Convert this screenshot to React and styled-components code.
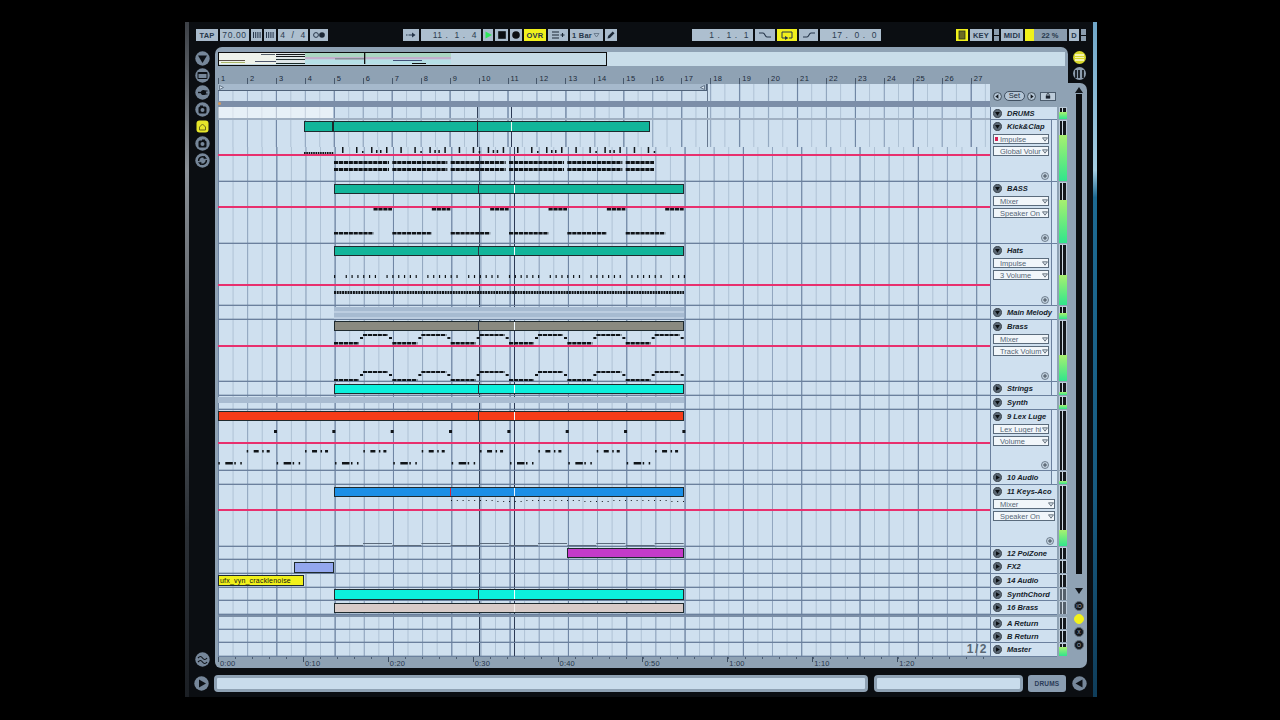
import React from 'react';
import styled, { createGlobalStyle, css } from 'styled-components';

const GlobalStyle = createGlobalStyle`
  html, body {
    margin: 0;
    height: 100%;
    overflow: hidden;
    background: #000;
    font-family: "Liberation Sans", Arial, sans-serif;
  }
  * { box-sizing: border-box; }
`;

const PANEL = '#8fa2b4';
const LANE = '#cfe0ef';
const LINE = '#6b809d';
const YELLOW = '#f1f11c';
const UPPER_BAR = 28.96;
const LOWER_BAR = 29.17;
const PERIOD = LOWER_BAR * 2;

const gridLines = css`
  background-color: ${LANE};
  background-image:
    linear-gradient(to right, #6f85a3 1px, transparent 1px),
    linear-gradient(to right, #90a5be 1px, transparent 1px),
    linear-gradient(to right, #aec1d4 1px, transparent 1px);
  background-size: ${({ $bar }) => `${$bar * 2}px 100%, ${$bar}px 100%, ${$bar / 2}px 100%`};
`;

const S = {
  Page: styled.div`
    width: 1280px;
    height: 720px;
    padding: 22px 0 0 185px;
    background: #000;
  `,
  Window: styled.div`
    display: flex;
    width: 912px;
    height: 675px;
    overflow: hidden;
  `,
  LeftEdge: styled.div`
    flex: 0 0 4px;
    background: linear-gradient(#3c4046, #8a9096 22%, #5f646a 45%, #2a2f35 75%, #1b1f24);
  `,
  RightEdge: styled.div`
    flex: 0 0 4px;
    background: linear-gradient(#6fa6c8, #a4cde2 22%, #1d6a93 26%, #175a80 70%, #0f3d5a);
  `,
  Content: styled.div`
    flex: 1;
    min-width: 0;
    background: #0b0e12;
  `,
  Toolbar: styled.div`
    display: flex;
    justify-content: space-between;
    padding: 7px 7px 0;
    height: 25px;
  `,
  Group: styled.div`
    display: flex;
    gap: 2px;
    height: 12px;
  `,
  Tool: styled.div`
    display: flex;
    align-items: center;
    justify-content: center;
    width: ${({ $w }) => $w}px;
    height: 12px;
    color: #26364a;
    background: ${({ $active }) => ($active ? YELLOW : '#a9bbcc')};
    font-size: 7.5px;
    font-weight: 700;
    letter-spacing: 0.2px;
    white-space: nowrap;
  `,
  Display: styled.div`
    display: flex;
    align-items: center;
    justify-content: ${({ $end }) => ($end ? 'flex-end' : 'center')};
    width: ${({ $w }) => $w}px;
    height: 12px;
    padding-right: ${({ $end }) => ($end ? 4 : 0)}px;
    color: #2c3c50;
    background: #adbfcf;
    font-size: 8.5px;
    letter-spacing: 0.6px;
    white-space: pre;
  `,
  Cpu: styled.div`
    display: flex;
    align-items: center;
    justify-content: center;
    width: 42px;
    height: 12px;
    padding-left: 8px;
    color: #26364a;
    background: linear-gradient(to right, ${YELLOW} 9px, #8a9cae 9px);
    font-size: 7.5px;
    font-weight: 700;
  `,
  Stack: styled.div`
    display: flex;
    flex-direction: column;
    gap: 1px;
    width: 5px;
    height: 12px;
    &::before, &::after {
      content: '';
      flex: 1;
      background: #8b9dae;
    }
  `,
  Main: styled.div`
    display: flex;
    height: 621px;
  `,
  LeftRail: styled.div`
    flex: 0 0 26px;
    display: flex;
    flex-direction: column;
    align-items: center;
    justify-content: space-between;
    padding: 4px 0 1px;
  `,
  RailIcons: styled.div`
    display: flex;
    flex-direction: column;
    gap: 2px;
  `,
  RailIcon: styled.svg`
    display: block;
    width: 15px;
    height: 15px;
  `,
  Panel: styled.div`
    flex: 0 0 853px;
    padding: 5px 1px 0 3px;
    background: ${PANEL};
    border-radius: 7px 7px 0 6px;
  `,
  Overview: styled.div`
    height: 14px;
    margin: 0 2px 4px 0;
    background: #c9dde9;
  `,
  OverviewBox: styled.div`
    width: 389px;
    height: 14px;
    border: 1.5px solid #0c0c0c;
    background: #c5dbe6;
  `,
  Ruler: styled.div`
    display: flex;
    height: 14px;
  `,
  RulerCell: styled.div`
    position: relative;
    flex: 0 0 ${UPPER_BAR}px;
    padding: 4px 0 0 3px;
    color: #1c2a3a;
    font-size: 7.5px;
    line-height: 9px;
    letter-spacing: 0.4px;
    &::before {
      content: '';
      position: absolute;
      left: 0;
      bottom: 0;
      width: 1px;
      height: 6px;
      background: #47586c;
    }
  `,
  TopArea: styled.div`
    display: flex;
    height: 23px;
  `,
  TopLeft: styled.div`
    flex: 0 0 772px;
  `,
  TopLane: styled.div`
    position: relative;
    height: 17px;
    ${gridLines}
  `,
  LoopBrace: styled.div`
    position: absolute;
    left: 0;
    top: 0;
    width: 489px;
    height: 7px;
    background: #a6b9cc;
    border-bottom: 1px solid #4f6279;
    border-right: 1px solid #4f6279;
  `,
  LoopEnd: styled.svg`
    position: absolute;
    top: 1px;
    ${({ $right }) => ($right ? 'right: 1px;' : 'left: 1px;')}
    width: 5px;
    height: 5px;
  `,
  Band: styled.div`
    position: relative;
    height: 6px;
    background: #7c8ea8;
    &::before {
      content: '';
      position: absolute;
      left: 0;
      top: 1px;
      width: 3px;
      height: 3px;
      border-radius: 50%;
      background: #d89a5a;
    }
  `,
  SetBar: styled.div`
    display: flex;
    align-items: center;
    gap: 2px;
    height: 10px;
    margin: 7px 0 0 3px;
  `,
  SetPill: styled.div`
    width: 21px;
    height: 10px;
    border: 1px solid #3f4f60;
    border-radius: 5px;
    color: #1c2a3a;
    background: #b5c6d6;
    font-size: 7.5px;
    line-height: 8px;
    text-align: center;
  `,
  LockButton: styled.div`
    display: flex;
    align-items: center;
    justify-content: center;
    width: 16px;
    height: 9px;
    margin-left: 2px;
    background: #bccbd9;
    border: 1px solid #4c5c6d;
  `,
  Row: styled.div`
    display: flex;
    height: ${({ $h }) => $h}px;
  `,
  Lane: styled.div`
    position: relative;
    flex: 0 0 772px;
    overflow: hidden;
    border-bottom: ${({ $thick }) => ($thick ? '2px solid #a0b0c2' : `1px solid ${LINE}`)};
    box-shadow: inset 0 -1px 0 rgba(107, 128, 157, 0.35);
    ${gridLines}
  `,
  UpperGrid: styled.div`
    position: absolute;
    left: 0;
    top: 0;
    width: 100%;
    height: ${({ $h }) => $h}px;
    ${gridLines}
  `,
  LightPatch: styled.div`
    position: absolute;
    left: 0;
    top: 0;
    width: 115px;
    height: 100%;
    background: rgba(255, 255, 255, 0.5);
  `,
  Marker: styled.div`
    position: absolute;
    left: ${({ $x }) => $x}px;
    top: ${({ $top }) => $top || 0}px;
    bottom: 0;
    width: 1px;
    background: ${({ $color }) => $color || '#33425a'};
  `,
  AutomationLine: styled.div`
    position: absolute;
    left: 0;
    right: 0;
    top: ${({ $y }) => $y}px;
    height: 2px;
    background: #e8306e;
  `,
  Clip: styled.div`
    position: absolute;
    left: ${({ $x }) => $x}px;
    top: ${({ $y }) => $y}px;
    width: ${({ $w }) => $w}px;
    height: ${({ $h }) => $h}px;
    overflow: hidden;
    background: ${({ $color }) => $color};
    border: ${({ $flat }) => ($flat ? 'none' : '1px solid #1e2a2e')};
    color: #111;
    font-size: 7px;
    line-height: 9px;
    padding-left: 1px;
    letter-spacing: 0.2px;
    white-space: nowrap;
  `,
  ClipTick: styled.div`
    position: absolute;
    left: ${({ $x }) => $x}px;
    top: 0;
    bottom: 0;
    width: 1px;
    background: ${({ $color }) => $color};
  `,
  Notes: styled.svg`
    position: absolute;
    left: 0;
    top: 0;
    width: 772px;
    height: 100%;
  `,
  PageMark: styled.div`
    position: absolute;
    right: 2px;
    top: 0;
    color: #5a6876;
    font-size: 12px;
    font-weight: 700;
    line-height: 13px;
    letter-spacing: 1.5px;
  `,
  Header: styled.div`
    flex: 0 0 67px;
    background: #d6e6f4;
    border-bottom: 1px solid ${LINE};
    border-left: 1px solid ${LINE};
  `,
  HeaderInner: styled.div`
    display: flex;
    flex-direction: column;
    height: 100%;
    margin-right: ${({ $inset }) => ($inset ? 5 : 0)}px;
    padding: 0 0 0 2px;
    background: ${LANE};
    border-right: ${({ $inset }) => ($inset ? `1px solid ${LINE}` : 'none')};
  `,
  TitleRow: styled.div`
    display: flex;
    align-items: center;
    flex: 0 0 13px;
    gap: 5px;
  `,
  TrackName: styled.span`
    color: #141c2a;
    font-size: 7.5px;
    font-style: italic;
    font-weight: 700;
    white-space: nowrap;
  `,
  Chooser: styled.div`
    position: relative;
    display: flex;
    align-items: center;
    width: ${({ $wide }) => ($wide ? 62 : 56)}px;
    height: 10px;
    margin-top: ${({ $first }) => ($first ? 1 : 2)}px;
    padding-left: 6px;
    color: #566778;
    background: #f1f6fa;
    border: 1px solid #5a6b7c;
    font-size: 7.5px;
    white-space: nowrap;
  `,
  RedSquare: styled.span`
    position: absolute;
    left: 1px;
    top: 2px;
    width: 3px;
    height: 4px;
    background: #d81f55;
  `,
  ChooserArrow: styled.svg`
    position: absolute;
    right: 0;
    top: 2px;
    width: 6px;
    height: 5px;
  `,
  AddButton: styled.svg`
    display: block;
    align-self: flex-end;
    width: 8px;
    height: 8px;
    margin: auto ${({ $wide }) => ($wide ? 3 : 2)}px 1px 0;
  `,
  Meter: styled.div`
    display: flex;
    flex-direction: column;
    flex: 0 0 8px;
    margin-left: 2px;
    background: #bccbd9;
    border-bottom: 1px solid ${PANEL};
  `,
  MeterBars: styled.div`
    flex: 1;
    margin: 1px 1px 0;
    background: linear-gradient(to right,
      ${({ $dim }) => ($dim ? '#55606b' : '#14181c')} 0 2.5px, #cfdae4 2.5px 3.5px,
      ${({ $dim }) => ($dim ? '#55606b' : '#14181c')} 3.5px 6px);
  `,
  MeterFill: styled.div`
    height: ${({ $level }) => $level}%;
    background: linear-gradient(#a8f070, #30e68c);
  `,
  Separator: styled.div`
    width: 772px;
    height: 2px;
    background: #7b8ea6;
  `,
  TimeRuler: styled.div`
    display: flex;
    height: 11px;
    width: 772px;
    background-image: linear-gradient(to right, #4d5e72 1px, transparent 1px);
    background-size: 17px 2px;
    background-repeat: repeat-x;
  `,
  TimeCell: styled.div`
    position: relative;
    flex: 0 0 84.9px;
    padding: 2px 0 0 2px;
    color: #25354a;
    font-size: 7.5px;
    line-height: 9px;
    letter-spacing: 0.2px;
    &::before {
      content: '';
      position: absolute;
      left: 0;
      top: 0;
      width: 1px;
      height: 5px;
      background: #3d4d60;
    }
  `,
  RightColumn: styled.div`
    flex: 0 0 19px;
    display: flex;
    flex-direction: column;
  `,
  TopDiscs: styled.div`
    display: flex;
    flex-direction: column;
    align-items: center;
    gap: 3px;
    height: 36px;
    padding: 4px 0 0 3px;
  `,
  Disc: styled.div`
    display: flex;
    flex-direction: column;
    align-items: center;
    justify-content: center;
    gap: 1px;
    width: 13px;
    height: 13px;
    border-radius: 50%;
    background: ${({ $yellow }) => ($yellow ? '#d8d82c' : '#8d9dae')};
  `,
  DiscLine: styled.span`
    width: 9px;
    height: 1.5px;
    background: #f4f4b0;
  `,
  DiscBars: styled.span`
    width: 9px;
    height: 8px;
    background: repeating-linear-gradient(to right, #20262c 0 2px, transparent 2px 3.5px);
  `,
  SideRail: styled.div`
    flex: 1;
    display: flex;
    flex-direction: column;
    align-items: center;
    padding: 4px 0 0 3px;
    background: ${PANEL};
    border-radius: 0 7px 7px 0;
  `,
  ScrollBar: styled.div`
    width: 6px;
    height: 480px;
    margin: 1px 0 14px;
    background: #0a0c0f;
  `,
  Triangle: styled.div`
    width: 0;
    height: 0;
    border-left: 4px solid transparent;
    border-right: 4px solid transparent;
    ${({ $up }) => ($up ? 'border-bottom: 6px solid #12161b;' : 'border-top: 6px solid #12161b;')}
  `,
  SmallDiscs: styled.div`
    display: flex;
    flex-direction: column;
    align-items: center;
    gap: 3px;
    margin-top: 7px;
  `,
  SmallDisc: styled.div`
    width: 10px;
    height: 10px;
    border-radius: 50%;
    color: #aeb9c4;
    background: ${({ $yellow }) => ($yellow ? YELLOW : '#14181d')};
    border: 1px solid ${({ $yellow }) => ($yellow ? YELLOW : '#5e6b78')};
    font-size: 5px;
    line-height: 8px;
    text-align: center;
  `,
  Bottom: styled.div`
    display: flex;
    align-items: center;
    height: 17px;
    margin-top: 7px;
  `,
  PlayCell: styled.div`
    position: relative;
    flex: 0 0 25px;
    display: flex;
    justify-content: center;
    &::after {
      content: '';
      position: absolute;
      left: 10px;
      top: 21px;
      width: 12px;
      height: 8px;
      border-radius: 50%;
      background: #e8eef4;
    }
  `,
  Field: styled.div`
    flex: 0 0 ${({ $w }) => $w}px;
    height: 17px;
    margin-right: ${({ $mr }) => $mr}px;
    background: #c9dcec;
    border: 3px solid ${PANEL};
    border-radius: 4px;
  `,
  ScopeButton: styled.div`
    flex: 0 0 38px;
    height: 17px;
    margin-right: 6px;
    color: #2a3b58;
    background: #8a9db1;
    border-radius: 3px;
    font-size: 6.5px;
    font-weight: 700;
    line-height: 17px;
    text-align: center;
    letter-spacing: 0.2px;
  `,
};

const barLabels = Array.from({ length: 27 }, (_, i) => i + 1);
const timeLabels = ['0:00', '0:10', '0:20', '0:30', '0:40', '0:50', '1:00', '1:10', '1:20'];
const X = x => x - 218;

const Rects = ({ items, fill = '#101418' }) =>
  items.map(([x, y, w, h], i) => <rect key={i} x={x} y={y} width={w} height={h} fill={fill} />);

// every 2 bars from a start position until the end of the clip
const periods = (start, end) => {
  const out = [];
  for (let x = X(start); x < X(end); x += PERIOD) out.push(x);
  return out;
};

const dashes = (x0, x1, y, h, w = 4.2) => {
  const out = [];
  for (let x = x0; x < x1; x += w + 0.7) out.push([x, y, Math.min(w, x1 - x), h]);
  return out;
};

const kickNotes = () => {
  const items = [...dashes(X(304), X(334), 32, 2, 1.6)];
  const ticks = [[8, 6], [22, 6], [28, 2], [37, 6], [42, 3], [46, 3], [52, 6]];
  periods(334, 654).forEach(p => {
    ticks.forEach(([o, h]) => {
      if (p + o < X(654)) items.push([p + o, 33 - h, 1.5, h]);
    });
    const end = Math.min(p + 55, X(654));
    items.push(...dashes(p, end, 41, 3), ...dashes(p, end, 48, 3));
  });
  return items;
};

const bassNotes = () => {
  const items = [];
  periods(334, 684).forEach(p => {
    items.push(...dashes(p + 39.5, p + 58, 26, 2.5), ...dashes(p, p + 39.5, 50, 2.5));
  });
  return items;
};

const hatsNotes = () => {
  const items = [];
  for (let x = X(334); x < X(684); x += 5.83) {
    if (Math.round(x / 5.83) % 7 !== 0) items.push([x, 31, 1.2, 3]);
  }
  items.push(...dashes(X(334), X(684), 47, 3, 2));
  return items;
};

const brassNotes = () => {
  const items = [];
  [[22, 14, 17], [59, 51, 54]].forEach(([low, high, mid]) => {
    periods(334, 684).forEach(p => {
      items.push(
        ...dashes(p, p + 25, low, 2.5),
        [p + 26, mid, 3, 2],
        ...dashes(p + 29, p + 54, high, 2),
        [p + 55, mid, 3, 2],
      );
    });
  });
  return items.filter(([x]) => x < X(684));
};

const lexNotes = () => {
  const items = [];
  for (let x = X(274); x < X(684); x += PERIOD) items.push([x, 20, 3, 3]);
  const mid = [[0, 1.5], [7, 5], [15.5, 1.5], [20, 3]];
  for (let x = X(246.7); x < X(684); x += PERIOD) mid.forEach(([o, w]) => items.push([x + o, 40, w, 2.5]));
  const low = [[0, 1.5], [7, 7.5], [16, 1.5], [22, 1.5]];
  for (let x = X(218.3); x < X(684); x += PERIOD) low.forEach(([o, w]) => items.push([x + o, 52, w, 2.5]));
  return items.filter(([x]) => x < X(684));
};

const keysDots = () => {
  const items = [];
  for (let x = X(451); x < X(684); x += 5.8) items.push([x, 15 + (Math.round(x) % 3 === 0 ? 1 : 0), 1, 1]);
  return items;
};

const keysLine = () => {
  const items = [];
  periods(334, 684).forEach(p => {
    items.push([p, 60, 29, 1], [p + 29, 58, 29, 1]);
  });
  return items;
};

const teal = '#12b59a';
const cyan = '#0cf0dc';
const band = 'linear-gradient(#a7bbd1 0 35%, #bccde0 35% 50%, #a7bbd1 50% 80%, #bccde0 80%)';

const tracks = [
  { name: 'DRUMS', h: 13, level: 55, upper: 13, patch: true, thick: true },
  {
    name: 'Kick&Clap', h: 62, inset: true, level: 76, upper: 27, auto: 34, add: true,
    choosers: [{ label: 'Impulse', red: true }, { label: 'Global Volur' }],
    clips: [
      { from: 304, to: 333, y: 1, h: 11, color: teal, marks: [] },
      { from: 333, to: 650, y: 1, h: 11, color: teal, marks: [[477, '#1e2a2e'], [511, '#eafaf6']] },
    ],
    notes: kickNotes(),
  },
  {
    name: 'BASS', h: 62, inset: true, level: 71, auto: 24, add: true,
    choosers: [{ label: 'Mixer' }, { label: 'Speaker On' }],
    clips: [{ from: 334, to: 684, y: 2, h: 10, color: teal }],
    notes: bassNotes(),
  },
  {
    name: 'Hats', h: 62, inset: true, level: 50, auto: 40, add: true,
    choosers: [{ label: 'Impulse' }, { label: '3 Volume' }],
    clips: [{ from: 334, to: 684, y: 2, h: 10, color: teal }],
    notes: hatsNotes(),
  },
  {
    name: 'Main Melody', h: 14, level: 50,
    clips: [{ from: 334, to: 684, y: 1, h: 12, color: band, flat: true, marks: [] }],
  },
  {
    name: 'Brass', h: 62, inset: true, level: 42, auto: 25, add: true,
    choosers: [{ label: 'Mixer' }, { label: 'Track Volum' }],
    clips: [{ from: 334, to: 684, y: 1, h: 10, color: '#8a8a80' }],
    notes: brassNotes(),
  },
  {
    name: 'Strings', h: 14, inset: true, closed: true, level: 20,
    clips: [{ from: 334, to: 684, y: 2, h: 10, color: cyan }],
  },
  {
    name: 'Synth', h: 14, level: 30,
    clips: [{ from: 218, to: 684, y: 1, h: 6, color: '#a9bcd1', flat: true, marks: [] }],
  },
  {
    name: '9 Lex Luge', h: 61, inset: true, level: 0, auto: 32, add: true,
    choosers: [{ label: 'Lex Luger hi' }, { label: 'Volume' }],
    clips: [{ from: 218, to: 684, y: 1, h: 10, color: '#f63c18' }],
    notes: lexNotes(),
  },
  { name: '10 Audio', h: 14, inset: true, closed: true, level: 20 },
  {
    name: '11 Keys-Aco', h: 62, level: 27, auto: 24, add: true, wide: true,
    choosers: [{ label: 'Mixer' }, { label: 'Speaker On' }],
    clips: [{ from: 334, to: 684, y: 2, h: 10, color: '#1c8fe6', marks: [[450, '#d8203a'], [514, '#eaf6ff']] }],
    notes: keysDots(),
    lines: keysLine(),
  },
  {
    name: '12 PoiZone', h: 13, closed: true, level: 0,
    clips: [{ from: 567, to: 684, y: 1, h: 10, color: '#c43bc9' }],
  },
  {
    name: 'FX2', h: 14, closed: true, level: 0,
    clips: [{ from: 294, to: 334, y: 2, h: 11, color: '#93a7ee', marks: [] }],
  },
  {
    name: '14 Audio', h: 14, closed: true, level: 0,
    clips: [{ from: 218, to: 304, y: 1, h: 11, color: YELLOW, label: 'ufx_vyn_cracklenoise', marks: [] }],
  },
  {
    name: 'SynthChord', h: 13, closed: true, level: 0, dim: true,
    clips: [{ from: 334, to: 684, y: 1, h: 11, color: cyan }],
  },
  {
    name: '16 Brass', h: 14, closed: true, level: 0, dim: true,
    clips: [{ from: 334, to: 684, y: 2, h: 10, color: '#d8cbc8', marks: [[514, '#f4f0ee']] }],
  },
];

const returns = [
  { name: 'A Return', h: 13, closed: true, level: 0 },
  { name: 'B Return', h: 13, closed: true, level: 0 },
  { name: 'Master', h: 14, closed: true, level: 70, pageMark: true },
];

const FoldButton = ({ closed }) => (
  <svg width="9" height="9" viewBox="0 0 10 10" style={{ flex: 'none' }}>
    <circle cx="5" cy="5" r="4.6" fill="#596673" stroke="#2c353e" strokeWidth="0.8" />
    <polygon points={closed ? '3.4,2.4 7.6,5 3.4,7.6' : '2.4,3.4 7.6,3.4 5,7.6'} fill="#0a0d10" />
  </svg>
);

const RoundArrow = ({ right }) => (
  <svg width="9" height="9" viewBox="0 0 10 10">
    <circle cx="5" cy="5" r="4.4" fill="#b5c6d6" stroke="#3a4855" />
    <polygon points={right ? '4,2.6 7.4,5 4,7.4' : '6,2.6 2.6,5 6,7.4'} fill="#141a20" />
  </svg>
);

const Chooser = ({ label, red, first, wide }) => (
  <S.Chooser $first={first} $wide={wide}>
    {red && <S.RedSquare />}
    {label}
    <S.ChooserArrow viewBox="0 0 6 5">
      <polygon points="0.5,0.8 5.5,0.8 3,4.2" fill="#d8e2ea" stroke="#3f4c59" strokeWidth="0.7" />
    </S.ChooserArrow>
  </S.Chooser>
);

const Header = ({ track }) => (
  <S.Header>
    <S.HeaderInner $inset={track.inset}>
      <S.TitleRow>
        <FoldButton closed={track.closed} />
        <S.TrackName>{track.name}</S.TrackName>
      </S.TitleRow>
      {track.choosers && track.choosers.map((c, i) => (
        <Chooser key={c.label} {...c} first={i === 0} wide={track.wide} />
      ))}
      {track.add && (
        <S.AddButton $wide={track.wide} viewBox="0 0 8 8">
          <circle cx="4" cy="4" r="3.5" fill="#c2d2e0" stroke="#5a6978" strokeWidth="0.8" />
          <path d="M2 4h4M4 2v4" stroke="#39444f" strokeWidth="0.9" />
        </S.AddButton>
      )}
    </S.HeaderInner>
  </S.Header>
);

const Clip = ({ from, to, y, h, color, flat, label, marks }) => {
  const ticks = marks || [[478, '#2a3644'], [514, '#f2fbff']];
  return (
    <S.Clip $x={X(from)} $y={y} $w={to - from} $h={h} $color={color} $flat={flat}>
      {label}
      {ticks.map(([x, c]) => <S.ClipTick key={x} $x={x - from - 1} $color={c} />)}
    </S.Clip>
  );
};

const Lane = ({ track }) => {
  const upper = track.upper || 0;
  return (
    <S.Lane $bar={LOWER_BAR} $thick={track.thick}>
      {upper < track.h && <S.Marker $x={X(479)} $top={upper} />}
      {upper < track.h && <S.Marker $x={X(514)} $top={upper} $color="#2c3a55" />}
      {upper > 0 && (
        <S.UpperGrid $bar={UPPER_BAR} $h={upper}>
          {track.patch && <S.LightPatch />}
          <S.Marker $x={X(477)} />
          <S.Marker $x={X(511)} $color="#2c3a55" />
          <S.Marker $x={X(707)} $color="#66788f" />
        </S.UpperGrid>
      )}
      {track.clips && track.clips.map(c => <Clip key={c.from} {...c} />)}
      {track.lines && (
        <S.Notes><Rects items={track.lines} fill="#5c6b7c" /></S.Notes>
      )}
      {track.notes && (
        <S.Notes><Rects items={track.notes} /></S.Notes>
      )}
      {track.auto !== undefined && <S.AutomationLine $y={track.auto} />}
      {track.pageMark && <S.PageMark>1/2</S.PageMark>}
    </S.Lane>
  );
};

const Track = ({ track }) => (
  <S.Row $h={track.h}>
    <Lane track={track} />
    <Header track={track} />
    <S.Meter>
      <S.MeterBars $dim={track.dim} />
      <S.MeterFill $level={track.level} />
    </S.Meter>
  </S.Row>
);

const railIcons = [
  <polygon key="a" points="3,4.5 12,4.5 7.5,12" fill="#0d1116" />,
  <g key="b">
    <rect x="2.5" y="4" width="10" height="7" rx="1" fill="#0d1116" />
    <rect x="3.5" y="6" width="8" height="4" fill="#76879a" />
  </g>,
  <g key="c" fill="#0d1116">
    <circle cx="8.5" cy="7.5" r="2.6" />
    <rect x="3" y="6.8" width="4" height="1.4" />
    <rect x="10" y="5.5" width="2.5" height="1" />
    <rect x="10" y="8.5" width="2.5" height="1" />
  </g>,
  <g key="d">
    <rect x="3.5" y="4.5" width="8" height="7" rx="1.5" fill="#0d1116" />
    <circle cx="7.5" cy="8" r="2" fill="#76879a" />
    <rect x="5" y="3.5" width="3" height="1.5" fill="#0d1116" />
  </g>,
  null,
  <g key="f">
    <rect x="3.5" y="4.5" width="8" height="7" rx="1.5" fill="#0d1116" />
    <circle cx="7.5" cy="8" r="2" fill="#76879a" />
    <rect x="7" y="3.5" width="3" height="1.5" fill="#0d1116" />
  </g>,
  <g key="g" fill="none" stroke="#0d1116" strokeWidth="1.4">
    <path d="M3.6 8a4 4 0 0 1 6.6-3.2" />
    <path d="M11.4 7a4 4 0 0 1-6.6 3.2" />
    <polygon points="9.2,3 11.6,5.6 8.8,5.8" fill="#0d1116" strokeWidth="0.4" />
    <polygon points="5.8,12 3.4,9.4 6.2,9.2" fill="#0d1116" strokeWidth="0.4" />
  </g>,
];

const RailIcon = ({ children }) => (
  <S.RailIcon viewBox="0 0 15 15">
    <circle cx="7.5" cy="7.5" r="7.2" fill="#76879a" />
    {children}
  </S.RailIcon>
);

const OverviewArt = () => (
  <svg width="386" height="11" viewBox="0 0 386 11" style={{ display: 'block' }}>
    <rect x="0" y="0" width="57" height="11" fill="#eef2ea" />
    <rect x="57" y="0" width="29" height="11" fill="#dfe6e8" />
    <rect x="0" y="7" width="26" height="1" fill="#5b5048" />
    <rect x="2" y="9" width="24" height="1" fill="#a9b66a" />
    <rect x="42" y="1" width="14" height="1" fill="#55606a" />
    <rect x="36" y="8" width="21" height="1" fill="#50586f" />
    <rect x="57" y="1" width="29" height="1" fill="#14181a" />
    <rect x="57" y="3" width="29" height="1" fill="#14181a" />
    <rect x="57" y="6" width="29" height="1" fill="#2a3a38" />
    <rect x="57" y="10" width="29" height="1" fill="#1a2a28" />
    <rect x="86" y="0" width="146" height="4" fill="#abd6c2" />
    <rect x="86" y="4" width="146" height="2.5" fill="#c3b0cc" />
    <rect x="86" y="6.5" width="146" height="4.5" fill="#b5dfe6" />
    <rect x="116" y="5" width="29" height="1.5" fill="#8a8f98" />
    <rect x="174" y="7" width="29" height="1" fill="#41507a" />
    <rect x="145" y="0" width="1.3" height="11" fill="#111" />
    <rect x="193" y="10" width="14" height="1" fill="#111" />
  </svg>
);

const ToolIcon = ({ children, w = 12 }) => (
  <svg width={w} height="10" viewBox={`0 0 ${w} 10`}>{children}</svg>
);

const BarsIcon = () => (
  <ToolIcon w={10}>
    <path d="M1.5 2v6M3.7 2v6M5.9 2v6M8.1 2v6" stroke="#26364a" strokeWidth="1" />
  </ToolIcon>
);

const Toolbar = () => (
  <S.Toolbar>
    <S.Group>
      <S.Tool $w={22}>TAP</S.Tool>
      <S.Display $w={29}>70.00</S.Display>
      <S.Tool $w={11}><BarsIcon /></S.Tool>
      <S.Tool $w={12}><BarsIcon /></S.Tool>
      <S.Display $w={30}>4  /  4</S.Display>
      <S.Tool $w={18}>
        <ToolIcon w={16}>
          <circle cx="5" cy="5" r="2.4" fill="none" stroke="#26364a" />
          <circle cx="11" cy="5" r="2.8" fill="#1c2836" />
        </ToolIcon>
      </S.Tool>
    </S.Group>
    <S.Group>
      <S.Tool $w={16}>
        <ToolIcon>
          <path d="M1 5h1.5M3.5 5h4" stroke="#26364a" strokeWidth="1.1" />
          <polygon points="7,2.5 10.5,5 7,7.5" fill="#26364a" />
        </ToolIcon>
      </S.Tool>
      <S.Display $w={60} $end>{'11 .  1 .  4'}</S.Display>
      <S.Tool $w={10}>
        <ToolIcon w={9}><polygon points="1.5,1.5 8,5 1.5,8.5" fill="#2fe85a" /></ToolIcon>
      </S.Tool>
      <S.Tool $w={13}>
        <ToolIcon><rect x="2.2" y="1.2" width="7.6" height="7.6" fill="#0c0f13" /></ToolIcon>
      </S.Tool>
      <S.Tool $w={12}>
        <ToolIcon><circle cx="6" cy="5" r="3.8" fill="#0c0f13" /></ToolIcon>
      </S.Tool>
      <S.Tool $w={22} $active>OVR</S.Tool>
      <S.Tool $w={20}>
        <ToolIcon w={14}>
          <path d="M1 2h7M1 5h7M1 8h7M9.5 5h4M11.5 3v4" stroke="#1c2836" strokeWidth="1.1" />
        </ToolIcon>
      </S.Tool>
      <S.Tool $w={33}>
        1 Bar
        <ToolIcon w={9}>
          <polygon points="2,3.5 7,3.5 4.5,7" fill="none" stroke="#5d6e80" strokeWidth="0.8" />
        </ToolIcon>
      </S.Tool>
      <S.Tool $w={12}>
        <ToolIcon>
          <path d="M2.5 8.5l.6-2.4 4.6-4.6 1.8 1.8-4.6 4.6z" fill="#1c2836" />
        </ToolIcon>
      </S.Tool>
    </S.Group>
    <S.Group>
      <S.Display $w={61} $end>{'1 .  1 .  1'}</S.Display>
      <S.Tool $w={20}>
        <ToolIcon w={14}><path d="M1 3h4c2 0 2 4 4 4h4" fill="none" stroke="#26364a" strokeWidth="1.1" /></ToolIcon>
      </S.Tool>
      <S.Tool $w={20} $active>
        <ToolIcon w={14}>
          <path d="M9 8h3V2H2v6h3" fill="none" stroke="#26364a" />
          <polygon points="5,6 8.5,8 5,10" fill="#26364a" />
        </ToolIcon>
      </S.Tool>
      <S.Tool $w={19}>
        <ToolIcon w={14}><path d="M1 7h4c2 0 2-4 4-4h4" fill="none" stroke="#26364a" strokeWidth="1.1" /></ToolIcon>
      </S.Tool>
      <S.Display $w={61} $end>{'17 .  0 .  0'}</S.Display>
    </S.Group>
    <S.Group>
      <S.Tool $w={12} $active>
        <ToolIcon w={8}>
          <rect x="1" y="1" width="6" height="8" fill="#6b6a22" stroke="#26301c" strokeWidth="0.8" />
        </ToolIcon>
      </S.Tool>
      <S.Tool $w={22}>KEY</S.Tool>
      <S.Stack />
      <S.Tool $w={22}>MIDI</S.Tool>
      <S.Cpu>22 %</S.Cpu>
      <S.Tool $w={10}>D</S.Tool>
      <S.Stack />
    </S.Group>
  </S.Toolbar>
);

const App = () => (
  <S.Page>
    <GlobalStyle />
    <S.Window>
      <S.LeftEdge />
      <S.Content>
        <Toolbar />
        <S.Main>
          <S.LeftRail>
            <S.RailIcons>
              {railIcons.map((icon, i) => (
                icon ? <RailIcon key={i}>{icon}</RailIcon> : (
                  <S.RailIcon key={i} viewBox="0 0 15 15">
                    <rect x="1.5" y="1.5" width="12" height="12" rx="3" fill="#e6e62a" />
                    <path d="M4.5 8l3-3 3 3v3h-6z" fill="none" stroke="#6b6b1c" />
                  </S.RailIcon>
                )
              ))}
            </S.RailIcons>
            <RailIcon>
              <path d="M3 6c2-2 3-2 4.5 0s3 2 4.5 0M3 10c2-2 3-2 4.5 0s3 2 4.5 0" fill="none" stroke="#0d1116" strokeWidth="1.2" />
            </RailIcon>
          </S.LeftRail>
          <S.Panel>
            <S.Overview>
              <S.OverviewBox><OverviewArt /></S.OverviewBox>
            </S.Overview>
            <S.Ruler>
              {barLabels.map(n => <S.RulerCell key={n}>{n}</S.RulerCell>)}
            </S.Ruler>
            <S.TopArea>
              <S.TopLeft>
                <S.TopLane $bar={UPPER_BAR}>
                  <S.LoopBrace>
                    <S.LoopEnd viewBox="0 0 5 5">
                      <polygon points="0.5,0.5 4.5,2.5 0.5,4.5" fill="#d5e2ee" stroke="#46586c" strokeWidth="0.7" />
                    </S.LoopEnd>
                    <S.LoopEnd $right viewBox="0 0 5 5">
                      <polygon points="4.5,0.5 0.5,2.5 4.5,4.5" fill="#d5e2ee" stroke="#46586c" strokeWidth="0.7" />
                    </S.LoopEnd>
                  </S.LoopBrace>
                  <S.Marker $x={X(707)} $color="#66788f" />
                </S.TopLane>
                <S.Band />
              </S.TopLeft>
              <S.SetBar>
                <RoundArrow />
                <S.SetPill>Set</S.SetPill>
                <RoundArrow right />
                <S.LockButton>
                  <svg width="6" height="6" viewBox="0 0 6 6">
                    <rect x="0.8" y="2.6" width="4.4" height="3" fill="#1c2430" />
                    <path d="M1.8 2.8V1.7a1.2 1.2 0 0 1 2.4 0v1.1" fill="none" stroke="#1c2430" strokeWidth="0.8" />
                  </svg>
                </S.LockButton>
              </S.SetBar>
            </S.TopArea>
            {tracks.map(t => <Track key={t.name} track={t} />)}
            <S.Separator />
            {returns.map(t => <Track key={t.name} track={t} />)}
            <S.TimeRuler>
              {timeLabels.map(l => <S.TimeCell key={l}>{l}</S.TimeCell>)}
            </S.TimeRuler>
          </S.Panel>
          <S.RightColumn>
            <S.TopDiscs>
              <S.Disc $yellow><S.DiscLine /><S.DiscLine /><S.DiscLine /></S.Disc>
              <S.Disc><S.DiscBars /></S.Disc>
            </S.TopDiscs>
            <S.SideRail>
              <S.Triangle $up />
              <S.ScrollBar />
              <S.Triangle />
              <S.SmallDiscs>
                <S.SmallDisc>IO</S.SmallDisc>
                <S.SmallDisc $yellow />
                <S.SmallDisc>X</S.SmallDisc>
                <S.SmallDisc>O</S.SmallDisc>
              </S.SmallDiscs>
            </S.SideRail>
          </S.RightColumn>
        </S.Main>
        <S.Bottom>
          <S.PlayCell>
            <RailIcon>
              <polygon points="5,3.5 12,7.5 5,11.5" fill="#0d1116" />
            </RailIcon>
          </S.PlayCell>
          <S.Field $w={654} $mr={6} />
          <S.Field $w={149} $mr={5} />
          <S.ScopeButton>DRUMS</S.ScopeButton>
          <RailIcon>
            <polygon points="10.5,3.5 3.5,7.5 10.5,11.5" fill="#0d1116" />
          </RailIcon>
        </S.Bottom>
      </S.Content>
      <S.RightEdge />
    </S.Window>
  </S.Page>
);

export default App;
